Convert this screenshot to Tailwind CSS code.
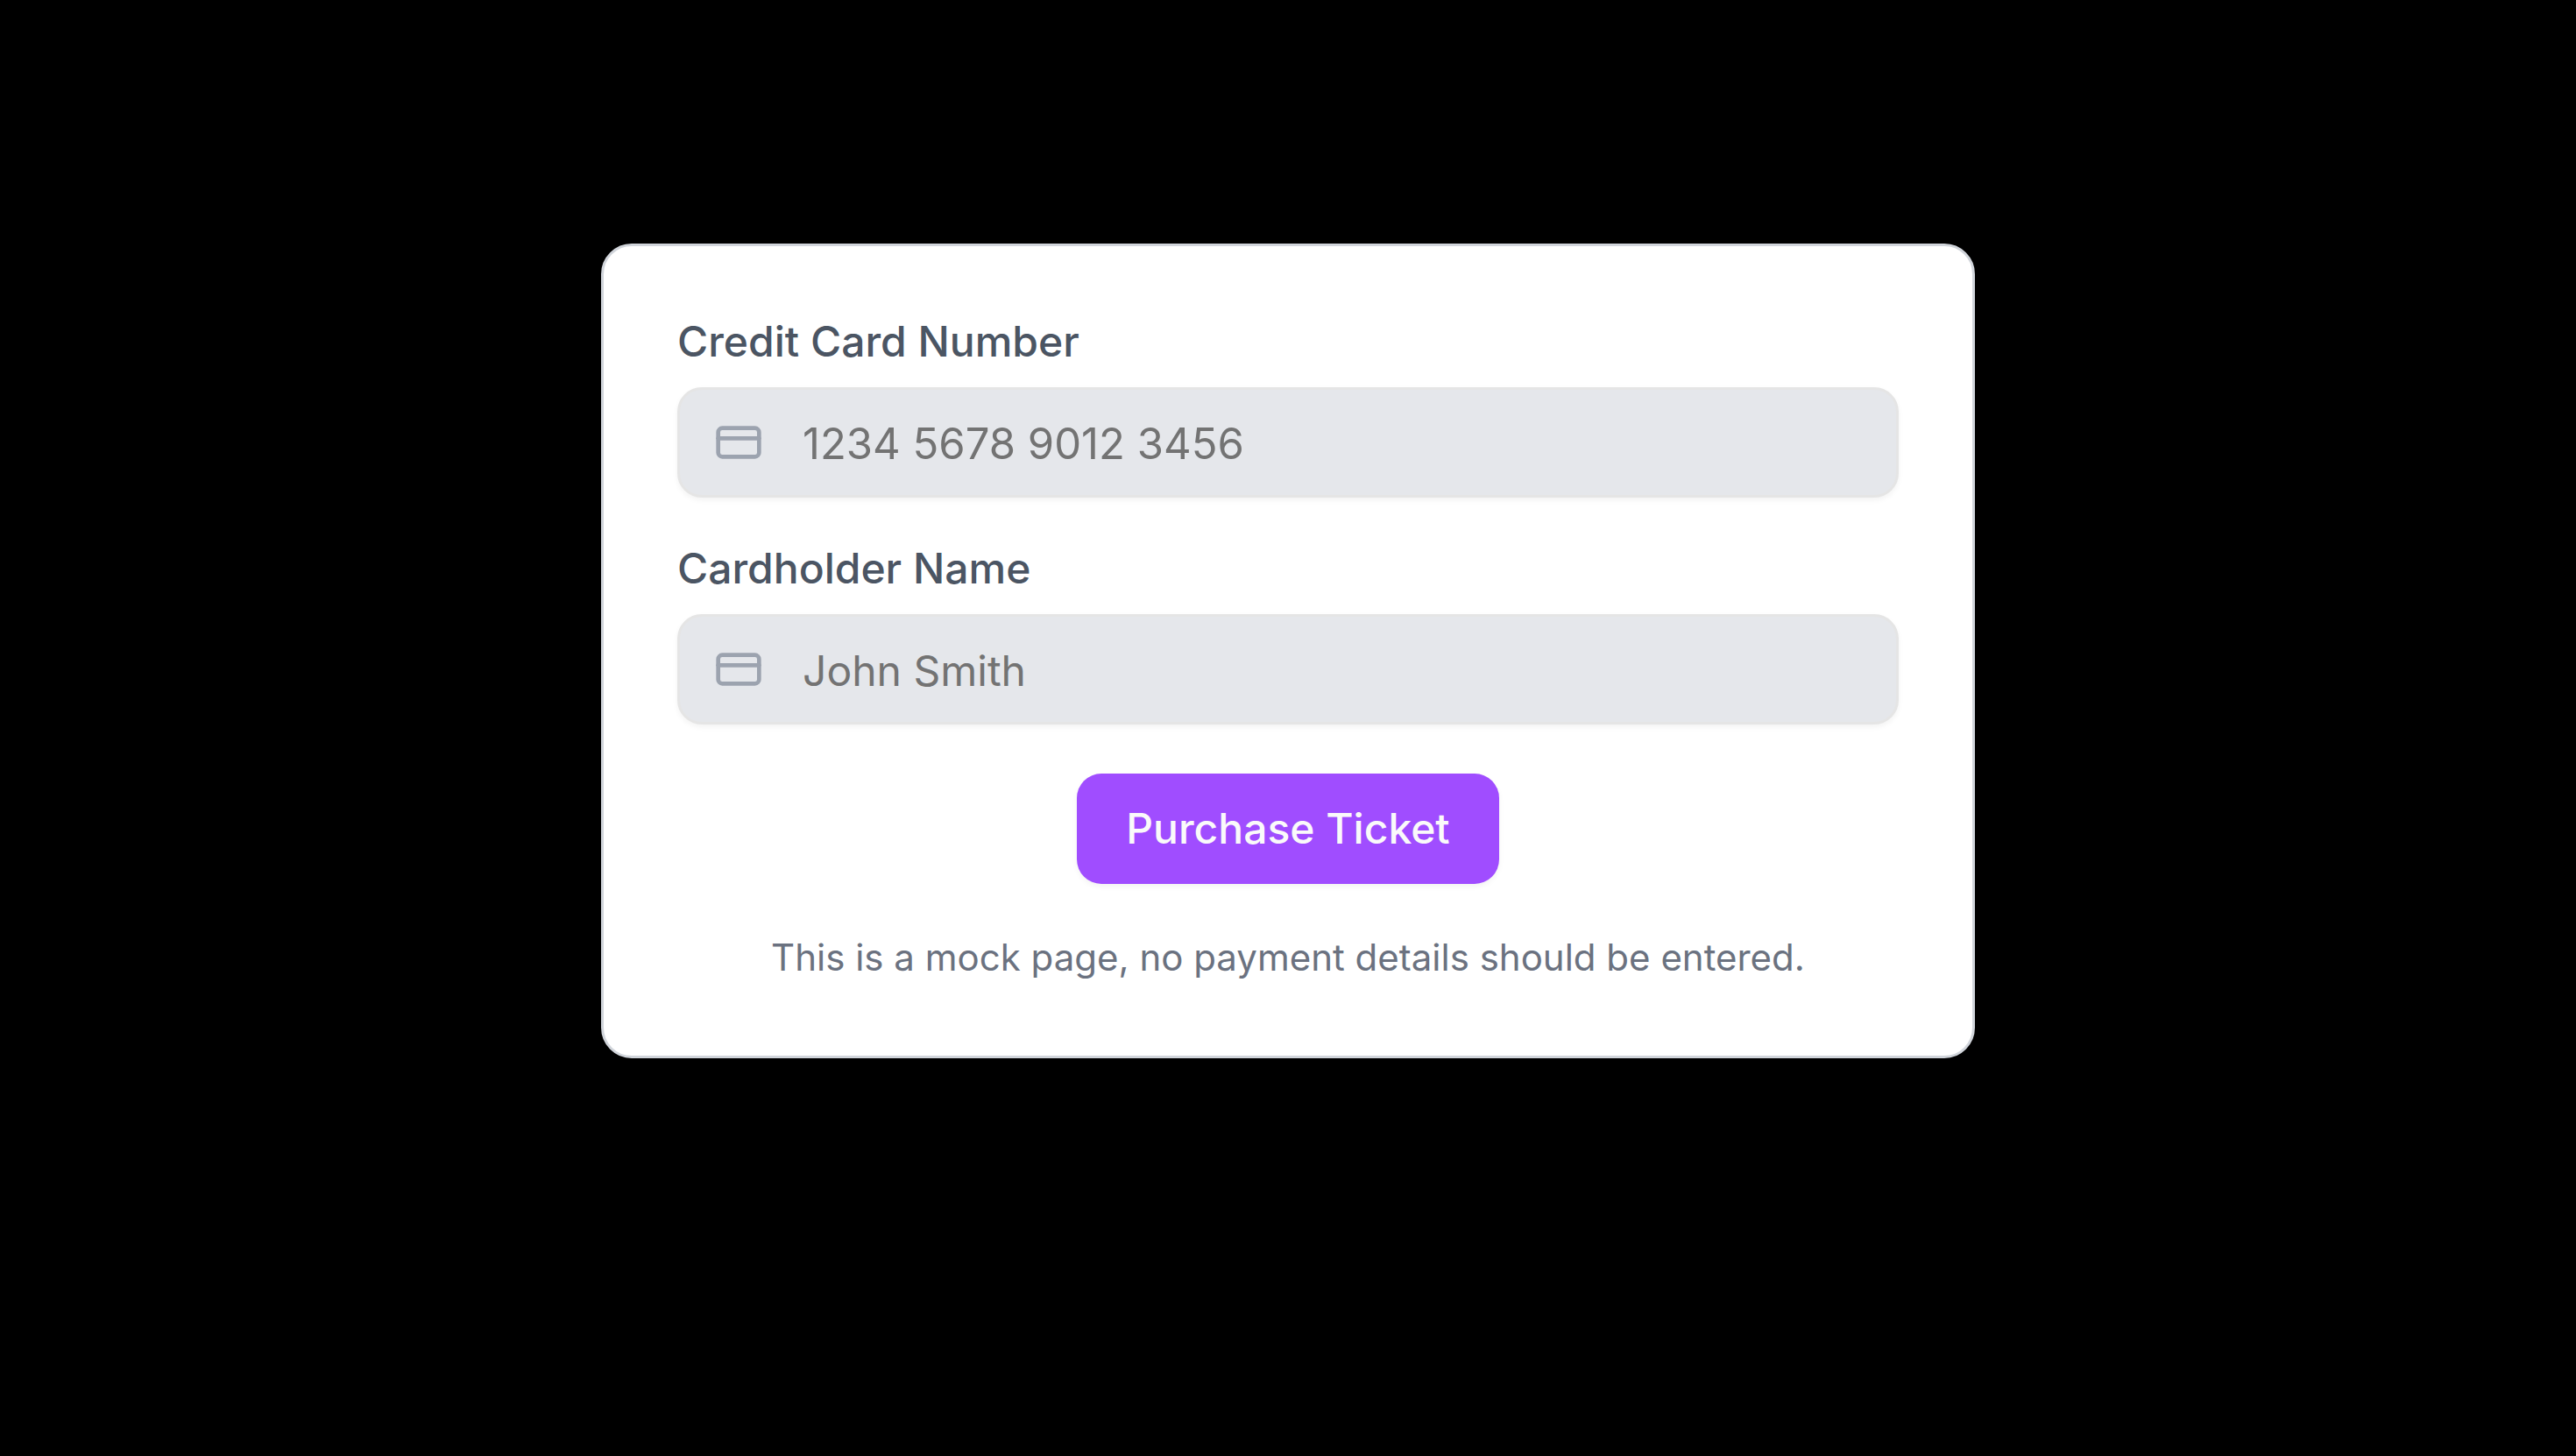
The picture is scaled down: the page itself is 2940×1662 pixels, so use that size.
<!DOCTYPE html>
<html lang="en">
<head>
<meta charset="utf-8">
<meta name="viewport" content="width=device-width, initial-scale=1">
<title>Purchase Ticket</title>
<script src="https://cdn.jsdelivr.net/npm/@tailwindcss/browser@4"></script>
</head>
<body class="min-h-screen bg-black font-['Inter',sans-serif]">
<main class="flex justify-center pt-[278px]">
  <form class="flex w-full max-w-[1568px] flex-col gap-14 rounded-[35px] border-3 border-[#d1d5db] bg-white p-[84px]">
    <div class="flex flex-col gap-7">
      <label for="card-number" class="text-[48px] leading-[49px] font-medium text-[#4b5563]">Credit Card Number</label>
      <div class="flex h-[126px] items-center rounded-[28px] border-3 border-[#e5e5e5] bg-[#e5e7eb] px-[39px] shadow-[0_3px_6px_rgba(0,0,0,0.05)]">
        <svg class="size-14 shrink-0 text-[#9ca3af]" viewBox="0 0 24 24" fill="none" stroke="currentColor" stroke-width="2" stroke-linecap="round" stroke-linejoin="round" aria-hidden="true"><rect width="20" height="14" x="2" y="5" rx="2"/><path d="M2 10h20"/></svg>
        <input id="card-number" type="text" inputmode="numeric" placeholder="1234 5678 9012 3456" class="ml-[45px] min-w-0 flex-1 bg-transparent pt-1 text-[49px] leading-[70px] outline-none placeholder:text-[#737373]">
      </div>
    </div>
    <div class="flex flex-col gap-7">
      <label for="card-name" class="text-[48px] leading-[49px] font-medium text-[#4b5563]">Cardholder Name</label>
      <div class="flex h-[126px] items-center rounded-[28px] border-3 border-[#e5e5e5] bg-[#e5e7eb] px-[39px] shadow-[0_3px_6px_rgba(0,0,0,0.05)]">
        <svg class="size-14 shrink-0 text-[#9ca3af]" viewBox="0 0 24 24" fill="none" stroke="currentColor" stroke-width="2" stroke-linecap="round" stroke-linejoin="round" aria-hidden="true"><rect width="20" height="14" x="2" y="5" rx="2"/><path d="M2 10h20"/></svg>
        <input id="card-name" type="text" placeholder="John Smith" class="ml-[45px] min-w-0 flex-1 bg-transparent pt-1 text-[48px] leading-[70px] outline-none placeholder:text-[#737373]">
      </div>
    </div>
    <button type="submit" class="h-[126px] self-center rounded-[28px] bg-[#a04dff] px-14 text-[48px] leading-[70px] font-medium text-[#fafafa] shadow-[0_3px_6px_rgba(0,0,0,0.05)]">Purchase Ticket</button>
    <p class="text-center text-[42px] leading-[56px] text-[#6b7280]">This is a mock page, no payment details should be entered.</p>
  </form>
</main>
</body>
</html>
